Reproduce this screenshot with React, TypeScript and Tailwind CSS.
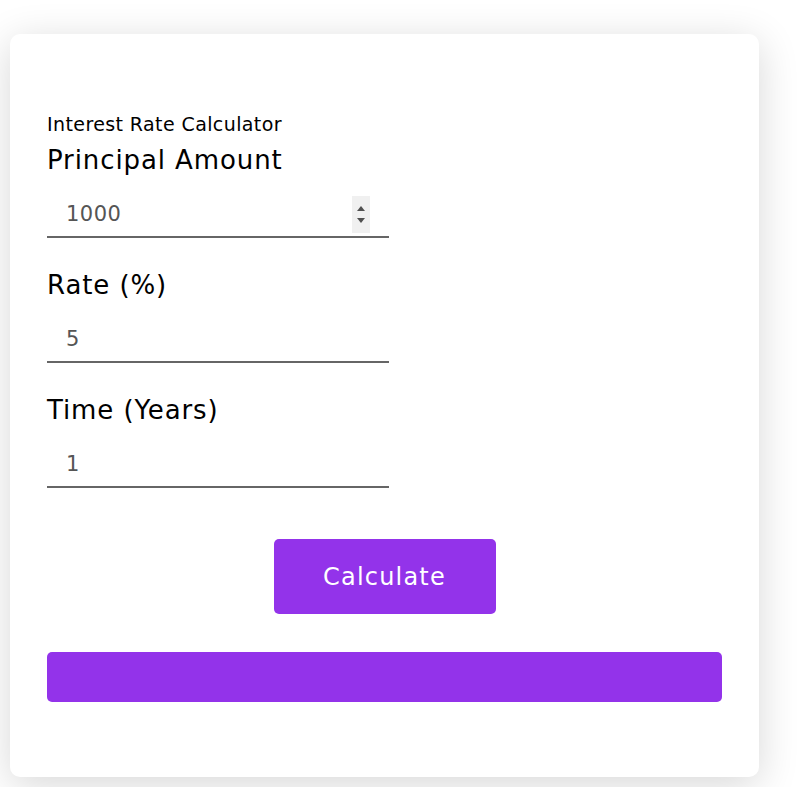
import React from "react";

const FONT = "'DejaVu Sans', 'Noto Sans', sans-serif";

function Field({ label, value, spinner }: { label: string; value: string; spinner?: boolean }) {
  return (
    <div className="flex flex-col">
      <label className="text-[26px] leading-[36px] tracking-[0.9px] text-black">{label}</label>
      <div className="relative mt-[14px] w-[342px]">
        <input
          type="text"
          defaultValue={value}
          className="h-[46px] w-full border-b-2 border-[#666666] bg-transparent pl-[19px] text-[21px] tracking-[0.5px] text-[#555555] outline-none"
          style={{ fontFamily: FONT }}
        />
        {spinner && (
          <div className="absolute right-[19px] top-[4px] flex h-[37px] w-[18px] flex-col items-center justify-center gap-[7px] bg-[#f0f0f0]">
            <svg width="8" height="5" viewBox="0 0 8 5"><path d="M4 0 L8 5 L0 5 Z" fill="#505050" /></svg>
            <svg width="8" height="5" viewBox="0 0 8 5"><path d="M0 0 L8 0 L4 5 Z" fill="#505050" /></svg>
          </div>
        )}
      </div>
    </div>
  );
}

export default function App() {
  return (
    <div className="min-h-[787px] w-[802px] bg-white" style={{ fontFamily: FONT }}>
      <div className="pt-[34px] pl-[10px]">
        <div className="w-[749px] rounded-[10px] bg-white px-[37px] pt-[77px] pb-[75px] shadow-[0_8px_40px_rgba(0,0,0,0.16)]">
          <div className="text-[19px] leading-[27px] tracking-[0.4px] text-black">Interest Rate Calculator</div>
          <div className="mt-[4px]">
            <Field label="Principal Amount" value="1000" spinner />
          </div>
          <div className="mt-[29px]">
            <Field label="Rate (%)" value="5" />
          </div>
          <div className="mt-[29px]">
            <Field label="Time (Years)" value="1" />
          </div>
          <div className="mt-[51px] flex justify-center">
            <button className="h-[75px] w-[222px] rounded-[5px] bg-[#9333ea] text-[24px] tracking-[1.2px] text-white" style={{ fontFamily: FONT }}>Calculate</button>
          </div>
          <div className="mt-[38px] h-[50px] w-full rounded-[5px] bg-[#9333ea]"></div>
        </div>
      </div>
    </div>
  );
}
